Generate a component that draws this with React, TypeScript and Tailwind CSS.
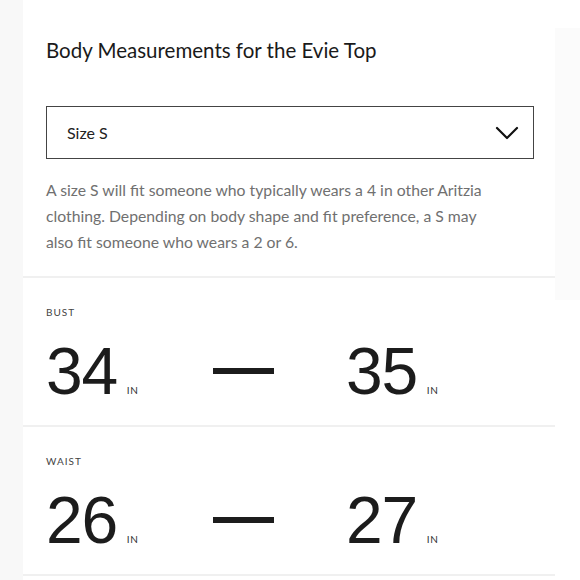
const rows = [
  { label: "BUST", from: "34", to: "35" },
  { label: "WAIST", from: "26", to: "27" },
];

function Chevron() {
  return (
    <svg width="24" height="14" viewBox="0 0 24 14" fill="none">
      <path d="M2 2 L12 12 L22 2" stroke="#111" strokeWidth="2.2" strokeLinecap="round" strokeLinejoin="round" />
    </svg>
  );
}

function Value({ n }: { n: string }) {
  return (
    <div className="flex items-baseline">
      <span className="text-[66px] leading-none tracking-[-0.02em] text-[#1c1c1c] font-['Liberation_Sans',sans-serif]">{n}</span>
      <span className="ml-[10px] text-[10px] tracking-[0.06em] text-[#333]">IN</span>
    </div>
  );
}

export default function App() {
  return (
    <div className="flex min-h-[580px] w-[580px] bg-white font-['Lato',sans-serif]">
      <div className="w-[23px] shrink-0 bg-[#f8f8f8]" />
      <div className="w-[532px] shrink-0 bg-white">
        <div className="pl-[23px] pr-[21px] pt-[36px] pb-[21px]">
          <h1 className="text-[20.5px] leading-[28px] text-[#1a1a1a]">Body Measurements for the Evie Top</h1>
          <div className="mt-[42px] flex h-[53px] items-center justify-between border-[1.5px] border-[#444] pl-[20px] pr-[14px]">
            <span className="text-[16px] text-[#222]">Size S</span>
            <Chevron />
          </div>
          <p className="mt-[18px] text-[15.75px] leading-[26px] text-[#707070]">
            A size S will fit someone who typically wears a 4 in other Aritzia clothing. Depending on body shape and fit preference, a S may
            <br />
            also fit someone who wears a 2 or 6.
          </p>
        </div>
        {rows.map((r) => (
          <div key={r.label} className="border-t-2 border-[#f0f0f0] pl-[23px] pt-[27px] pb-[21px]">
            <div className="text-[10px] leading-[15px] tracking-[0.1em] text-[#444]">{r.label}</div>
            <div className="mt-[18px] flex items-center">
              <div className="w-[167px]"><Value n={r.from} /></div>
              <div className="h-[6px] w-[61px] bg-[#1c1c1c]" />
              <div className="ml-[72px]"><Value n={r.to} /></div>
            </div>
          </div>
        ))}
        <div className="border-t-2 border-[#f0f0f0]" />
      </div>
      <div className="flex-1">
        <div className="mt-[28px] h-[272px] bg-[#fbfbfb]" />
      </div>
    </div>
  );
}
